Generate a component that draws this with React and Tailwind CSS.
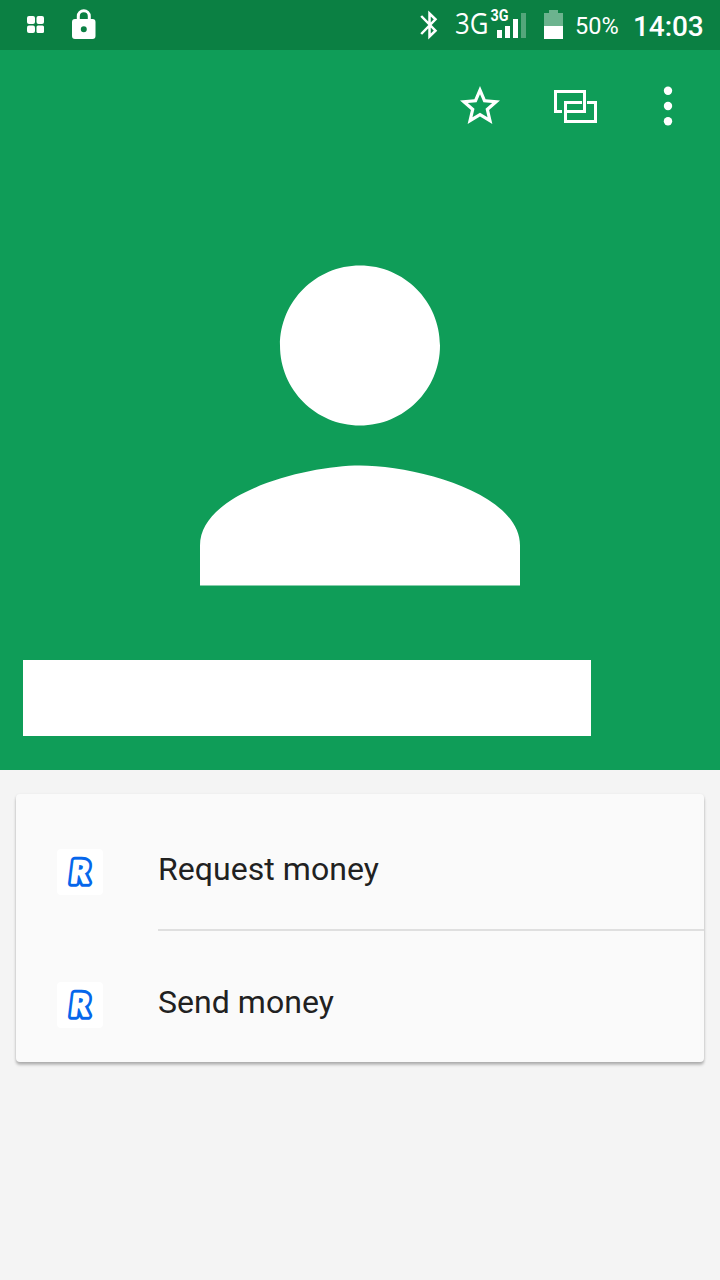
import React from 'react';

const actions = ['Request money', 'Send money'];

function StatusBar() {
  return (
    <div className="flex h-[50px] w-full items-start bg-[#0b8043] text-white">
      {/* Notifications */}
      <svg width="18" height="18" viewBox="0 0 18 18" className="mt-4 ml-[27px]" fill="currentColor">
        <rect x="0" y="0" width="8" height="8" rx="2" />
        <rect x="9.5" y="0" width="7.5" height="8" rx="2" />
        <rect x="0" y="9.5" width="8" height="7.5" rx="2" />
        <rect x="9.5" y="9.5" width="7.5" height="7.5" rx="1.5" />
      </svg>
      <svg width="24" height="31" viewBox="0 0 24 31" className="mt-[9px] ml-[27px]">
        <path d="M6.3 12V7.2a5.5 5.5 0 0 1 11 0V12" fill="none" stroke="currentColor" strokeWidth="3" />
        <path
          fillRule="evenodd"
          fill="currentColor"
          d="M3 10h17.500a3 3 0 0 1 3 3v14a3 3 0 0 1-3 3H3a3 3 0 0 1-3-3V13a3 3 0 0 1 3-3zm8.800 7.200a3 3 0 1 0 0 6 3 3 0 0 0 0-6z"
        />
      </svg>

      {/* System icons */}
      <svg width="19" height="31" viewBox="0 0 19 31" className="mt-[10px] ml-[324px]">
        <path
          d="M1.200 6 15.500 20.700 9.500 26.500V3.500L15.500 9.300 1.200 24"
          fill="none"
          stroke="currentColor"
          strokeWidth="2.500"
        />
      </svg>
      <svg width="72" height="44" viewBox="0 0 72 44" className="ml-[16px]" fill="currentColor">
        <text x="0" y="34" fontSize="28.500" textLength="33.500" lengthAdjust="spacingAndGlyphs" className="font-['Open_Sans',sans-serif]">
          3G
        </text>
        <text x="35.500" y="20.500" fontSize="16" textLength="18" lengthAdjust="spacingAndGlyphs" className="font-[Roboto,sans-serif] font-bold">
          3G
        </text>
        <path d="M42 30h5v8h-5zM50 26h5v12h-5zM58 19h5v19h-5z" />
        <path d="M66 13h5v25h-5z" opacity="0.3" />
      </svg>
      <svg width="19" height="29" viewBox="0 0 19 29" className="mt-[10px] ml-[17px]" fill="currentColor">
        <path d="M5 0h9v3h5v13H0V3h5z" opacity="0.4" />
        <path d="M0 16h19v13H0z" />
      </svg>
      <span className="mt-3 ml-3 w-[44px] font-[Roboto,sans-serif] text-[23.5px] leading-7 whitespace-nowrap">50%</span>
      <span className="mt-[11px] ml-[14px] font-[Roboto,sans-serif] text-[28px] leading-8 font-medium tracking-[-0.1px] whitespace-nowrap">14:03</span>
    </div>
  );
}

function Toolbar() {
  return (
    <div className="flex h-[112px] items-center justify-end pr-[47px] text-white">
      <svg width="48" height="48" viewBox="0 0 24 24" fill="currentColor">
        <path d="M22 9.24l-7.19-.62L12 2 9.19 8.63 2 9.24l5.46 4.73L5.82 21 12 17.27 18.18 21l-1.63-7.03L22 9.24zM12 15.4l-3.76 2.27 1-4.28-3.32-2.88 4.38-.38L12 6.1l1.71 4.04 4.38.38-3.32 2.88 1 4.28L12 15.4z" />
      </svg>
      {/* Linked contacts */}
      <svg width="44" height="34" viewBox="0 0 44 34" className="mt-[2px] ml-[50px]" fill="none" stroke="currentColor" strokeWidth="3">
        <path d="M8 21.500H1.500V1.500H30.500V21.500H13" />
        <path d="M28 12.500H11.500V31.500H41.500V12.500H33" />
      </svg>
      <svg width="10" height="40" viewBox="0 0 10 40" className="ml-[65px]" fill="currentColor">
        <circle cx="5" cy="4.800" r="4.200" />
        <circle cx="5" cy="20" r="4.200" />
        <circle cx="5" cy="35.200" r="4.200" />
      </svg>
    </div>
  );
}

function RevolutIcon() {
  return (
    <svg width="46" height="46" viewBox="0 0 46 46" className="rounded-[4px] bg-white" strokeLinejoin="round">
      <g transform="translate(13 34) skewX(-7)" fontSize="31.500" className="font-['Noto_Sans',sans-serif] font-bold">
        <text x="-1" y="0" textLength="19.500" lengthAdjust="spacingAndGlyphs" fill="#0666eb" stroke="#0666eb" strokeWidth="7.500">
          R
        </text>
        <text x="-1" y="0" textLength="19.500" lengthAdjust="spacingAndGlyphs" fill="#fff" stroke="#fff" strokeWidth="1.600">
          R
        </text>
      </g>
    </svg>
  );
}

function App() {
  return (
    <div className="flex h-[1280px] w-[720px] flex-col overflow-hidden bg-[#f4f4f4] font-[Roboto,sans-serif]">
      <StatusBar />
      <header className="h-[720px] bg-[#0f9d58]">
        <Toolbar />
        <svg width="480" height="480" viewBox="0 0.020 24 24" className="mx-auto mt-[24px] block" fill="#fff">
          <path d="M12 12c2.210 0 4-1.790 4-4s-1.790-4-4-4-4 1.790-4 4 1.790 4 4 4zm0 2c-2.670 0-8 1.340-8 4v2h16v-2c0-2.660-5.330-4-8-4z" />
        </svg>
        <div className="mt-[-6px] ml-[23px] h-[76px] w-[568px] bg-white" />
      </header>
      <main className="mx-4 mt-6 h-[268px] rounded-[4px] bg-[#fafafa] pt-[3px] shadow-[0_3px_3px_rgba(0,0,0,0.22),0_1px_3px_rgba(0,0,0,0.12)]">
        {actions.map((action, i) => (
          <div key={action} className="flex h-[133px] pl-[41px]">
            <div className="mt-[52px]">
              <RevolutIcon />
            </div>
            <div className={`ml-[55px] flex-1 pt-[52px] ${i < actions.length - 1 ? 'mb-[-1px] border-b-2 border-[#dfdfdf]' : ''}`}>
              <span className="block text-[32px] leading-10 tracking-[0.05px] text-[#212121]">{action}</span>
            </div>
          </div>
        ))}
      </main>
    </div>
  );
}

export default App;
